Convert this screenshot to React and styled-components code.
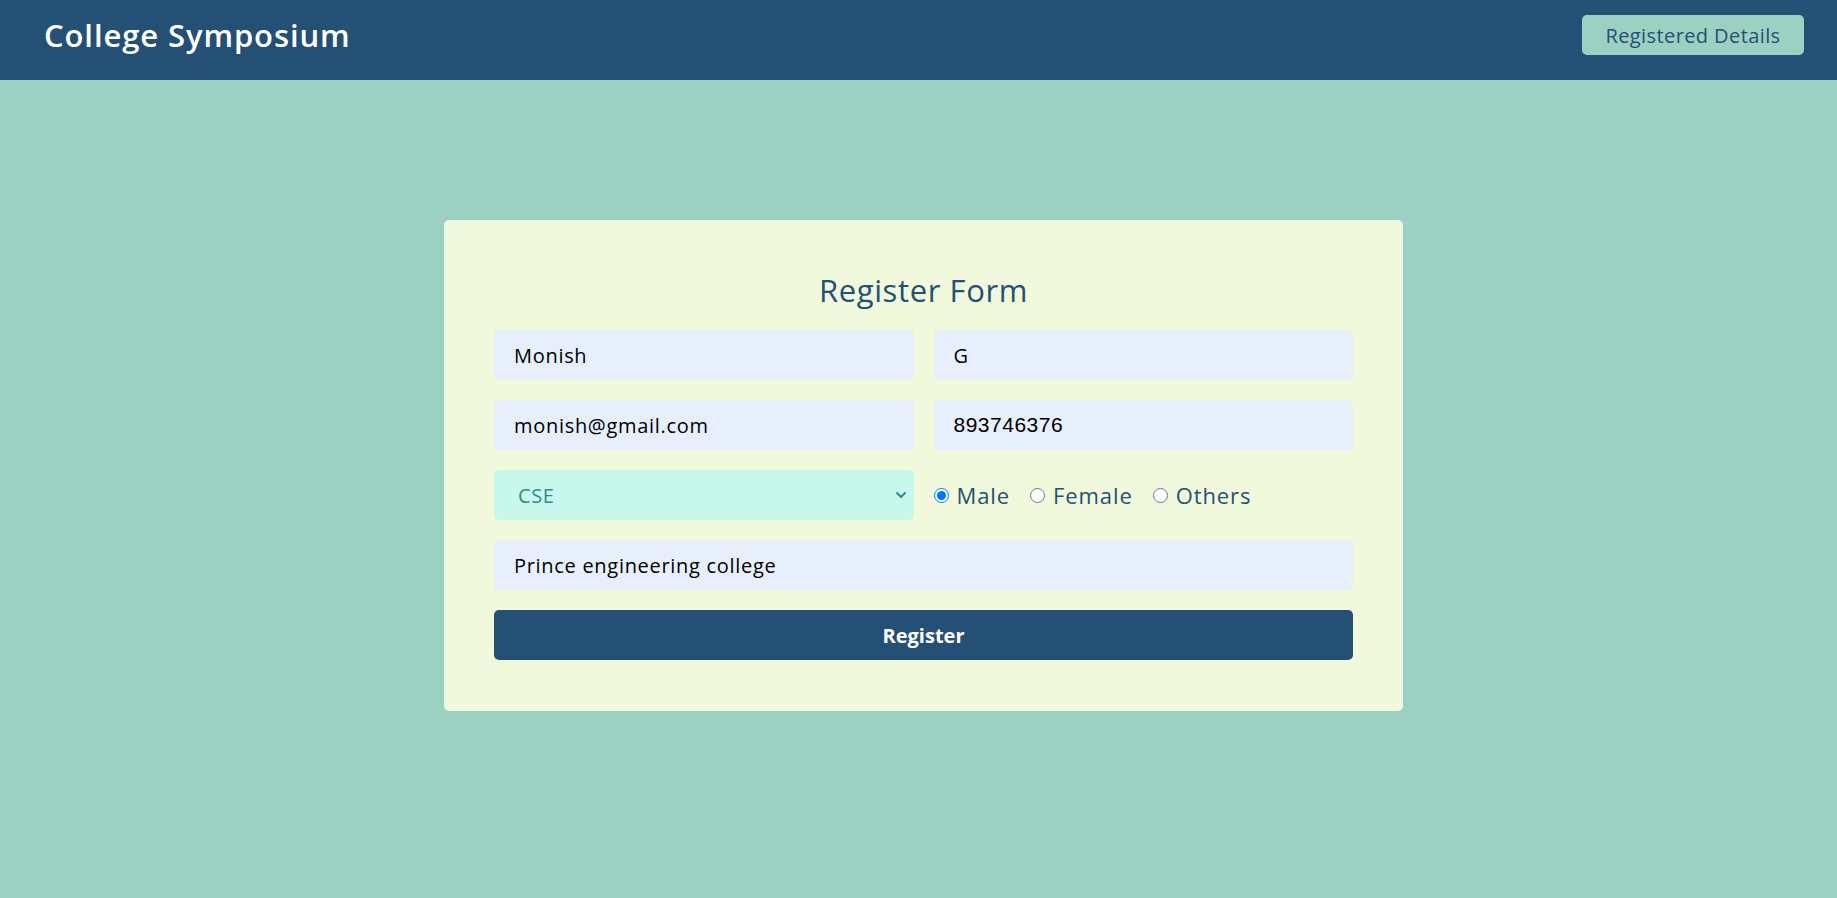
import React, { useState } from "react";
import styled, { createGlobalStyle } from "styled-components";

const GlobalStyle = createGlobalStyle`
  * {
    box-sizing: border-box;
  }
  body {
    margin: 0;
    background: #9bd0c2;
    font-family: "Open Sans", "Noto Sans", sans-serif;
  }
`;

const Header = styled.header`
  height: 80px;
  background: #255075;
  display: flex;
  align-items: center;
  justify-content: space-between;
  padding: 0 33px 10px 44px;
`;

const Brand = styled.h1`
  margin: 0;
  color: #fff;
  font-size: 31px;
  font-weight: 600;
  letter-spacing: 0.9px;
`;

const NavButton = styled.button`
  width: 222px;
  height: 40px;
  border: none;
  border-radius: 5px;
  background: #9bd0c2;
  color: #255075;
  font-family: inherit;
  font-size: 20px;
  letter-spacing: 0.4px;
  cursor: pointer;
`;

const Main = styled.main`
  display: flex;
  justify-content: center;
  padding: 140px 0 0 10px;
`;

const Card = styled.form`
  width: 959px;
  background: #f0f9dc;
  border-radius: 5px;
  padding: 50px 50px 51px;
  display: flex;
  flex-direction: column;
  gap: 20px;
`;

const Title = styled.h2`
  margin: 0;
  text-align: center;
  color: #255075;
  font-size: 31px;
  font-weight: 500;
  line-height: 40px;
  letter-spacing: 0.6px;
`;

const Row = styled.div`
  display: grid;
  grid-template-columns: 1fr 1fr;
  gap: 20px;
  align-items: center;
`;

const Input = styled.input`
  width: 100%;
  height: 50px;
  border: none;
  border-radius: 5px;
  background: #e8effc;
  padding: 0 20px;
  font-family: ${(p) => (p.$plain ? '"Liberation Sans", Arial, sans-serif' : "inherit")};
  font-size: ${(p) => (p.$plain ? "21px" : "20px")};
  letter-spacing: ${(p) => (p.$plain ? "0.5px" : "0.7px")};
  color: #000;
  outline: none;
`;

const Select = styled.select`
  width: 100%;
  height: 50px;
  border: none;
  border-radius: 5px;
  background: #c8f8ec;
  padding: 0 16px 0 24px;
  font-family: inherit;
  font-size: 20px;
  letter-spacing: 0.6px;
  color: #2b8f8c;
  outline: none;
  appearance: none;
  background-image: url("data:image/svg+xml,%3Csvg xmlns='http://www.w3.org/2000/svg' width='12' height='8' viewBox='0 0 12 8'%3E%3Cpath d='M1.5 1.5 6 6l4.5-4.5' fill='none' stroke='%232b8f8c' stroke-width='2'/%3E%3C/svg%3E");
  background-repeat: no-repeat;
  background-position: right 7px center;
`;

const RadioGroup = styled.div`
  display: flex;
  align-items: center;
  gap: 20px;
`;

const RadioLabel = styled.label`
  display: flex;
  align-items: center;
  gap: 8px;
  color: #255075;
  font-size: 22px;
  letter-spacing: 0.9px;
`;

const Radio = styled.input`
  width: 15px;
  height: 15px;
  margin: 0;
`;

const Submit = styled.button`
  height: 50px;
  border: none;
  border-radius: 5px;
  background: #255075;
  color: #fff;
  font-family: inherit;
  font-size: 20px;
  font-weight: 700;
  cursor: pointer;
`;

export default function App() {
  const [gender, setGender] = useState("Male");

  return (
    <>
      <GlobalStyle />
      <Header>
        <Brand>College Symposium</Brand>
        <NavButton type="button">Registered Details</NavButton>
      </Header>
      <Main>
        <Card onSubmit={(e) => e.preventDefault()}>
          <Title>Register Form</Title>
          <Row>
            <Input defaultValue="Monish" />
            <Input defaultValue="G" />
          </Row>
          <Row>
            <Input defaultValue="monish@gmail.com" />
            <Input $plain defaultValue="893746376" />
          </Row>
          <Row>
            <Select defaultValue="CSE">
              <option>CSE</option>
              <option>ECE</option>
              <option>EEE</option>
              <option>MECH</option>
            </Select>
            <RadioGroup>
              {["Male", "Female", "Others"].map((g) => (
                <RadioLabel key={g}>
                  <Radio
                    type="radio"
                    name="gender"
                    checked={gender === g}
                    onChange={() => setGender(g)}
                  />
                  {g}
                </RadioLabel>
              ))}
            </RadioGroup>
          </Row>
          <Input defaultValue="Prince engineering college" />
          <Submit type="submit">Register</Submit>
        </Card>
      </Main>
    </>
  );
}
